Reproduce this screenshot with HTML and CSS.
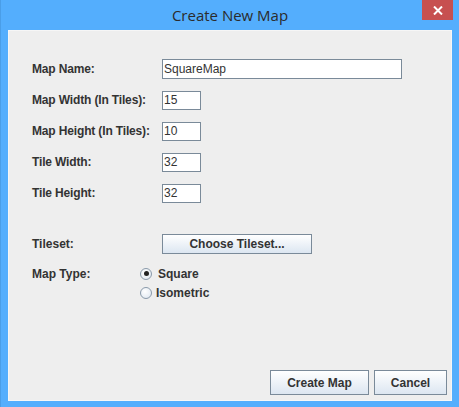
FILE: index.html
```html
<!DOCTYPE html>
<html>
<head>
<meta charset="utf-8">
<link rel="stylesheet" href="styles.css">
</head>
<body>
<div class="window">
  <div class="titlebar">
    <span class="title">Create New Map</span>
    <div class="close">
      <svg width="10" height="9" viewBox="0 0 10 9"><path d="M1 0.5 L9 8.5 M9 0.5 L1 8.5" stroke="#fff" stroke-width="2"/></svg>
    </div>
  </div>
  <div class="content">
    <div class="form">
      <div class="label">Map Name:</div>
      <div class="field wide">SquareMap</div>
      <div class="label">Map Width (In Tiles):</div>
      <div class="field">15</div>
      <div class="label">Map Height (In Tiles):</div>
      <div class="field">10</div>
      <div class="label">Tile Width:</div>
      <div class="field">32</div>
      <div class="label">Tile Height:</div>
      <div class="field">32</div>
    </div>
    <div class="tileset">
      <div class="label">Tileset:</div>
      <div class="button choose">Choose Tileset...</div>
    </div>
    <div class="maptype">
      <div class="label">Map Type:</div>
      <div class="radios">
        <div class="radio"><span class="dot on"></span><span>Square</span></div>
        <div class="radio iso"><span class="dot"></span><span>Isometric</span></div>
      </div>
    </div>
    <div class="actions">
      <div class="button create">Create Map</div>
      <div class="button cancel">Cancel</div>
    </div>
  </div>
</div>
</body>
</html>
```
FILE: styles.css
```css
html, body {
  margin: 0;
  padding: 0;
}
body {
  width: 459px;
  height: 407px;
  overflow: hidden;
  background: #54aefd;
}
.window {
  width: 459px;
  height: 407px;
  box-sizing: border-box;
  border-left: 1px solid #4a9ee8;
  display: flex;
  flex-direction: column;
}
.titlebar {
  position: relative;
  height: 30px;
  flex: none;
  display: flex;
  justify-content: center;
  align-items: center;
}
.title {
  font-family: "Open Sans", "Noto Sans", sans-serif;
  font-size: 15px;
  color: #2b2b2b;
  margin-top: -1px;
}
.close {
  position: absolute;
  top: 0;
  right: 6px;
  width: 31px;
  height: 20px;
  background: #c75050;
  display: flex;
  align-items: center;
  justify-content: center;
}
.content {
  margin: 0 7px 6px 7px;
  height: 371px;
  box-sizing: border-box;
  background: #eeeeee;
  border: 1px solid #f6f6f6;
  display: flex;
  flex-direction: column;
  font-family: "Liberation Sans", Arial, sans-serif;
  font-size: 12px;
  color: #333333;
}
.form {
  display: grid;
  grid-template-columns: 130px auto;
  grid-auto-rows: 20px;
  row-gap: 11px;
  padding: 28px 0 0 23px;
  align-items: center;
}
.label {
  font-weight: bold;
}
.form .label {
  letter-spacing: -0.15px;
}
.field {
  width: 39px;
  height: 19px;
  box-sizing: border-box;
  border: 1px solid #7a8a99;
  background: #fff;
  padding-left: 1px;
  line-height: 17px;
  font-size: 12px;
  color: #333;
}
.field.wide {
  width: 240px;
  height: 20px;
  line-height: 18px;
}
.tileset {
  display: grid;
  grid-template-columns: 130px auto;
  padding: 31px 0 0 23px;
  align-items: center;
}
.button {
  box-sizing: border-box;
  border: 1px solid #7a8a99;
  background: linear-gradient(#ffffff, #dce6f1);
  font-weight: bold;
  display: flex;
  align-items: center;
  justify-content: center;
}
.choose {
  width: 150px;
  height: 20px;
}
.maptype {
  display: grid;
  grid-template-columns: 108px auto;
  padding: 10px 0 0 23px;
}
.maptype .label {
  line-height: 19px;
  margin-top: 1px;
}
.radios {
  display: flex;
  flex-direction: column;
  gap: 0;
}
.radio {
  display: flex;
  align-items: center;
  gap: 6px;
  height: 19px;
  font-weight: bold;
}
.radio.iso {
  gap: 4px;
}
.dot {
  width: 12px;
  height: 12px;
  box-sizing: border-box;
  border-radius: 50%;
  border: 1px solid #8a9aaa;
  background: radial-gradient(circle at 40% 35%, #ffffff, #dbe4ee);
  display: flex;
  align-items: center;
  justify-content: center;
}
.dot.on::after {
  content: "";
  width: 5px;
  height: 5px;
  border-radius: 50%;
  background: #222;
}
.actions {
  margin-top: auto;
  display: flex;
  justify-content: flex-end;
  gap: 5px;
  padding: 0 4px 5px 0;
}
.create {
  width: 99px;
  height: 25px;
}
.cancel {
  width: 73px;
  height: 25px;
}
```
